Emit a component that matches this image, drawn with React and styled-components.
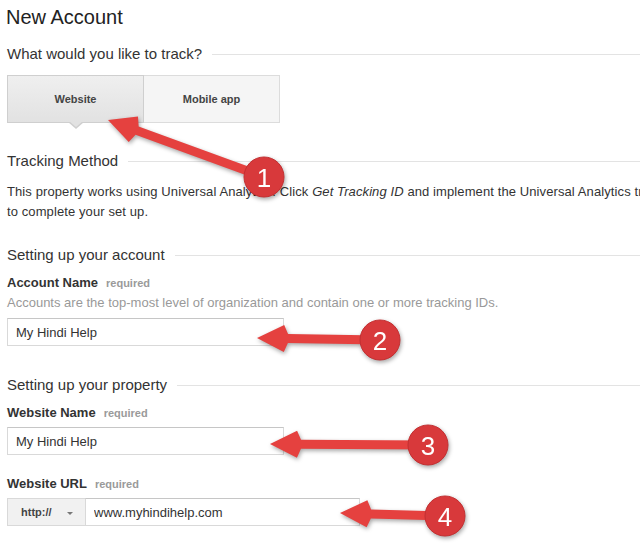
import React from "react";
import styled, { createGlobalStyle } from "styled-components";

const GlobalStyle = createGlobalStyle`
    html, body {
        margin: 0;
        padding: 0;
        background: #ffffff;
        overflow: hidden;
    }
    body {
        font-family: "Liberation Sans", Arial, sans-serif;
        color: #333333;
    }
`;

const Page = styled.div`
    position: relative;
    width: 640px;
    height: 543px;
    box-sizing: border-box;
    padding: 5px 0 0 7px;
    overflow: hidden;
`;

const Title = styled.h1`
    margin: 0 0 0 -1px;
    font-size: 20px;
    line-height: 24px;
    font-weight: normal;
    color: #222222;
`;

// section heading with the rule running to the right edge
const SectionHead = styled.div`
    display: flex;
    align-items: center;
    gap: 10px;
    margin-top: ${(p) => p.$top}px;
    font-size: 15px;
    line-height: 20px;
    color: #333333;
    white-space: nowrap;
    &::after {
        content: "";
        flex: 1;
        height: 1px;
        background: #e3e3e3;
    }
`;

const Toggle = styled.div`
    display: flex;
    width: 273px;
    margin-top: 11px;
`;

const ToggleOption = styled.div`
    position: relative;
    flex: 1;
    height: 48px;
    box-sizing: border-box;
    display: flex;
    align-items: center;
    justify-content: center;
    font-size: 11px;
    font-weight: bold;
    color: #444444;
    border: 1px solid ${(p) => (p.$active ? "#cfcfcf" : "#dcdcdc")};
    background: ${(p) =>
        p.$active ? "linear-gradient(#efefef, #e2e2e2)" : "#f5f5f5"};
    & + & {
        border-left: none;
    }
    ${(p) =>
        p.$active &&
        `
        &::before, &::after {
            content: "";
            position: absolute;
            left: 50%;
            width: 0;
            height: 0;
            border-style: solid;
            border-color: transparent;
        }
        &::before {
            top: 100%;
            margin-left: -8px;
            border-width: 7px 8px 0 8px;
            border-top-color: #cfcfcf;
        }
        &::after {
            top: calc(100% - 1px);
            margin-left: -7px;
            border-width: 6px 7px 0 7px;
            border-top-color: #e2e2e2;
        }
    `}
`;

const Note = styled.p`
    margin: 11px 0 0;
    font-size: 13px;
    line-height: 20px;
    letter-spacing: 0.1px;
    color: #333333;
    white-space: nowrap;
`;

const Label = styled.div`
    margin-top: ${(p) => p.$top}px;
    font-size: 13px;
    line-height: 16px;
    font-weight: bold;
    color: #333333;
`;

const Required = styled.span`
    margin-left: 8px;
    font-size: 11px;
    color: #9a9a9a;
`;

const Help = styled.div`
    margin-top: 4px;
    font-size: 13px;
    line-height: 16px;
    color: #999999;
    white-space: nowrap;
`;

const TextInput = styled.input`
    display: block;
    width: ${(p) => p.$width || 277}px;
    height: 28px;
    margin: ${(p) => p.$top || 0}px 0 0;
    box-sizing: border-box;
    padding: 0 8px;
    border: 1px solid #d9d9d9;
    border-top-color: #c6c6c6;
    border-radius: 0;
    outline: none;
    font-family: inherit;
    font-size: 13px;
    color: #333333;
    background: #ffffff;
`;

const UrlGroup = styled.div`
    display: flex;
    margin-top: 6px;
    height: 28px;
`;

const Scheme = styled.div`
    display: flex;
    align-items: center;
    gap: 15px;
    width: 78px;
    box-sizing: border-box;
    padding-left: 13px;
    border: 1px solid #d9d9d9;
    border-right: none;
    background: #f1f1f1;
    font-size: 11px;
    font-weight: bold;
    color: #444444;
`;

const Caret = styled.span`
    margin-top: 2px;
    border-left: 3px solid transparent;
    border-right: 3px solid transparent;
    border-top: 3px solid #777777;
`;

// red callout arrows drawn over the form
const Overlay = styled.svg`
    position: absolute;
    left: 0;
    top: 0;
    pointer-events: none;
`;

const Shadowed = styled.g`
    filter: drop-shadow(1px 2px 2px rgba(0, 0, 0, 0.35));
`;

const callouts = [
    { n: 1, tip: [108, 120], c: [264, 177] },
    { n: 2, tip: [257, 338], c: [380, 340] },
    { n: 3, tip: [270, 444], c: [428, 445] },
    { n: 4, tip: [340, 513], c: [445, 516] },
];

function Callout({ n, tip, c }) {
    const dx = c[0] - tip[0];
    const dy = c[1] - tip[1];
    const len = Math.sqrt(dx * dx + dy * dy);
    const angle = (Math.atan2(dy, dx) * 180) / Math.PI;
    const d = `M0 0 L27 -13.5 L31 -4.5 L${len} -4.5 L${len} 4.5 L31 4.5 L27 13.5 Z`;
    return (
        <Shadowed>
            <path
                d={d}
                fill="#e5413f"
                transform={`translate(${tip[0]} ${tip[1]}) rotate(${angle})`}
            />
            <circle cx={c[0]} cy={c[1]} r="20" fill="#d8393b" stroke="#c22f31" strokeWidth="1" />
            <text
                x={c[0]}
                y={c[1] + 9.5}
                textAnchor="middle"
                fill="#ffffff"
                fontSize="26"
                fontFamily="'Liberation Sans', Arial, sans-serif"
            >
                {n}
            </text>
        </Shadowed>
    );
}

export default function App() {
    return (
        <Page>
            <GlobalStyle />
            <Title>New Account</Title>

            <SectionHead $top={15}>What would you like to track?</SectionHead>
            <Toggle>
                <ToggleOption $active>Website</ToggleOption>
                <ToggleOption>Mobile app</ToggleOption>
            </Toggle>

            <SectionHead $top={28}>Tracking Method</SectionHead>
            <Note>
                This property works using Universal Analytics. Click <em>Get Tracking ID</em> and
                implement the Universal Analytics tracking code snippet
                <br />
                to complete your set up.
            </Note>

            <SectionHead $top={23}>Setting up your account</SectionHead>
            <Label $top={10}>
                Account Name<Required>required</Required>
            </Label>
            <Help>Accounts are the top-most level of organization and contain one or more tracking IDs.</Help>
            <TextInput $top={7} defaultValue="My Hindi Help" readOnly />

            <SectionHead $top={29}>Setting up your property</SectionHead>
            <Label $top={10}>
                Website Name<Required>required</Required>
            </Label>
            <TextInput $top={6} defaultValue="My Hindi Help" readOnly />

            <Label $top={21}>
                Website URL<Required>required</Required>
            </Label>
            <UrlGroup>
                <Scheme>
                    http://
                    <Caret />
                </Scheme>
                <TextInput $width={275} defaultValue="www.myhindihelp.com" readOnly />
            </UrlGroup>

            <Overlay width="640" height="543" viewBox="0 0 640 543">
                {callouts.map((c) => (
                    <Callout key={c.n} {...c} />
                ))}
            </Overlay>
        </Page>
    );
}
